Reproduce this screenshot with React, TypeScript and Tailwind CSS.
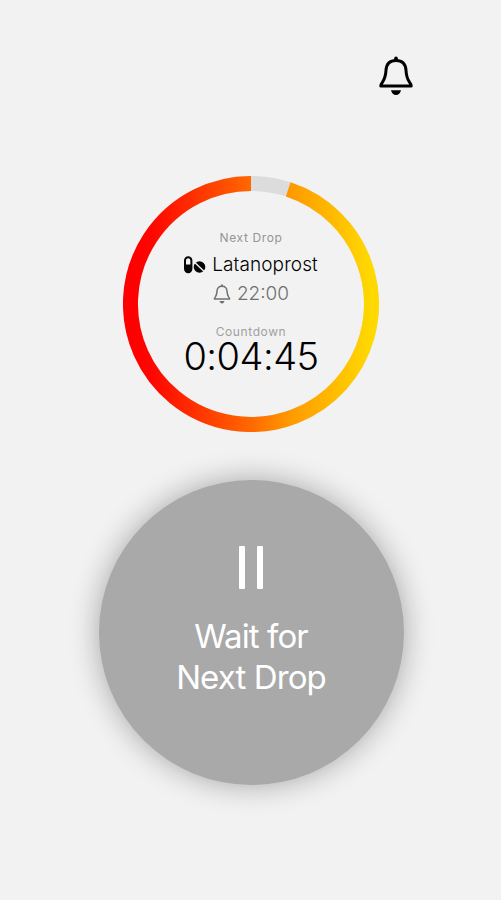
function BellIcon({ className, strokeWidth }: { className: string; strokeWidth: number }) {
  return (
    <svg viewBox="0 0 36 40" className={className} fill="none" stroke="currentColor" strokeWidth={strokeWidth} strokeLinejoin="round" strokeLinecap="round">
      <path d="M18 4.4C11.8 4.4 8.4 8.2 8 14.2C7.7 20.7 6.6 23.1 4.5 26.2C3.2 28 2.8 28.8 2.8 30H33.2C33.2 28.8 32.8 28 31.5 26.2C29.4 23.1 28.3 20.7 28 14.2C27.6 8.2 24.2 4.4 18 4.4Z" />
      <path d="M18 2.2V4" strokeWidth={strokeWidth + 0.6} />
      <path d="M13 34.2H23C22.3 37.4 20.5 39 18 39S13.7 37.4 13 34.2Z" fill="currentColor" stroke="none" />
    </svg>
  );
}

function PillsIcon() {
  return (
    <svg viewBox="0 0 22 18" className="h-[18px] w-[22px]">
      <rect x="1" y="1.2" width="6.4" height="15" rx="3.2" fill="none" stroke="#050505" strokeWidth="2" />
      <path d="M1 8.6H7.4V13A3.2 3.2 0 0 1 1 13Z" fill="#050505" />
      <circle cx="15.5" cy="11" r="5.8" fill="#050505" />
      <path d="M10.8 6.5L20.2 15.5" stroke="#f2f2f2" strokeWidth="1.4" />
    </svg>
  );
}

function Ring() {
  return (
    <svg viewBox="0 0 256 256" className="col-start-1 row-start-1 h-64 w-64" fill="none" strokeWidth="15">
      <defs>
        <linearGradient id="heat" gradientUnits="userSpaceOnUse" x1="9" y1="128" x2="248" y2="128">
          <stop offset="0" stopColor="#ff0000" />
          <stop offset="0.08" stopColor="#ff0500" />
          <stop offset="0.5" stopColor="#ff6900" />
          <stop offset="0.66" stopColor="#ff9900" />
          <stop offset="1" stopColor="#ffd900" />
        </linearGradient>
      </defs>
      <circle cx="128" cy="128" r="120.5" stroke="#dcdcdc" />
      <path d="M165.2 13.4A120.5 120.5 0 1 1 128 7.5" stroke="url(#heat)" />
    </svg>
  );
}

export default function App() {
  return (
    <main className="flex h-[900px] w-[501px] flex-col items-center overflow-hidden bg-[#f2f2f2] font-['Inter','Liberation_Sans',sans-serif]">
      <header className="flex h-44 w-full justify-end pt-14 pr-[87px]">
        <button aria-label="Notifications" className="h-10 w-9 text-black">
          <BellIcon className="h-10 w-9" strokeWidth={3} />
        </button>
      </header>
      <section className="ml-px grid h-64 w-64">
        <Ring />
        <div className="col-start-1 row-start-1 flex flex-col items-center pt-[54px] whitespace-nowrap">
          <p className="h-4 text-[12px] leading-4 tracking-[0.6px] text-[#959595]">Next Drop</p>
          <div className="mt-[7px] flex h-6 items-center gap-[6px]">
            <PillsIcon />
            <span className="text-[19px] leading-6 font-light tracking-[0.1px] text-black">Latanoprost</span>
          </div>
          <div className="mt-[5px] flex h-6 items-center gap-[6px] text-[#707070]">
            <BellIcon className="h-5 w-[18px]" strokeWidth={3} />
            <span className="text-[19px] leading-6 font-light">22:00</span>
          </div>
          <p className="mt-[18px] h-4 text-[12px] leading-4 tracking-[0.6px] text-[#a0a0a0]">Countdown</p>
          <p className="h-10 text-[38px] leading-[32px] font-light tracking-[-0.5px] text-black">0:04:45</p>
        </div>
      </section>
      <section className="mt-[48px] ml-px flex h-[305px] w-[305px] flex-col items-center rounded-full bg-[#a9a9a9] pt-[66px] text-white shadow-[0_0_30px_rgba(0,0,0,0.32)]">
        <div className="flex gap-[12px]">
          <span className="h-[43px] w-[6px] rounded-[1px] bg-white" />
          <span className="h-[43px] w-[6px] rounded-[1px] bg-white" />
        </div>
        <p className="mt-[27px] text-center text-[33px] leading-[41px] font-normal tracking-[-0.9px]">
          Wait for
          <br />
          Next Drop
        </p>
      </section>
    </main>
  );
}
